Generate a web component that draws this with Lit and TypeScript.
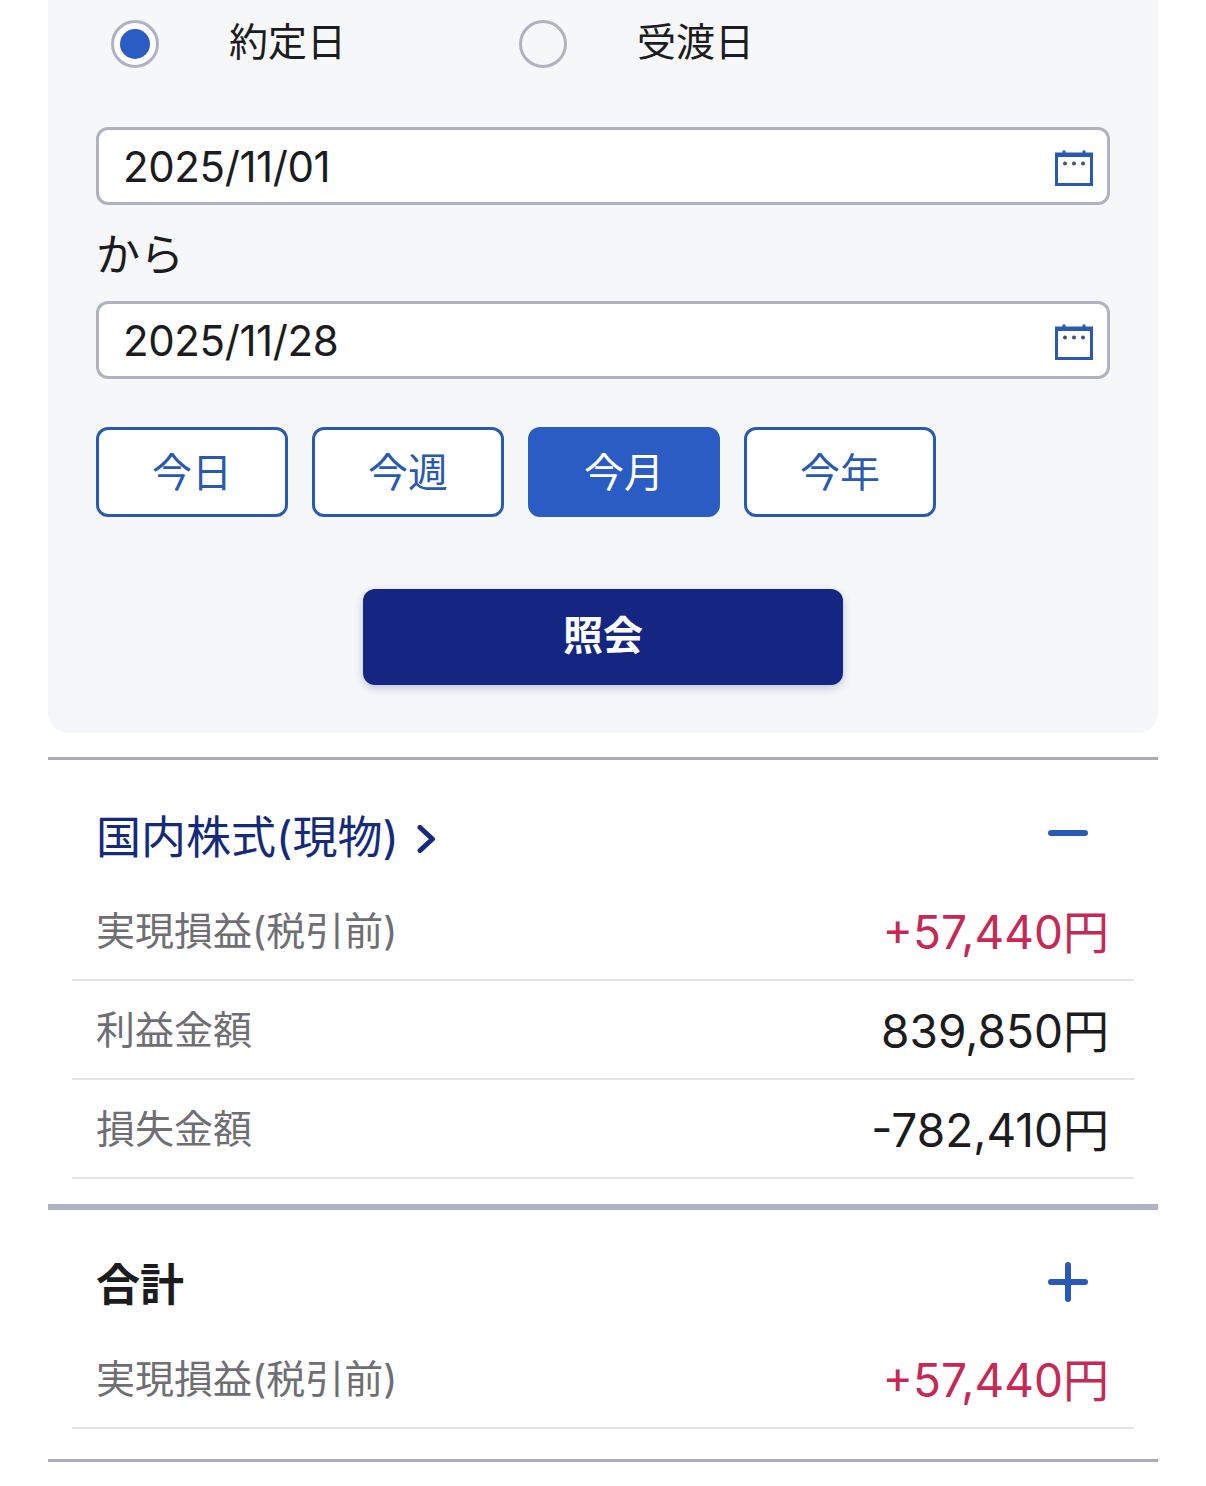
import { LitElement, html, css } from "lit";
import { customElement } from "lit/decorators.js";

const calendar = html`<svg class="cal" width="38" height="36" viewBox="0 0 38 36" fill="none">
  <rect x="1.5" y="4" width="35" height="30.5" stroke="#2a5ab0" stroke-width="3"/>
  <rect x="1" y="3" width="36" height="4" fill="#2a5ab0"/>
  <path d="M9 .5V5M29 .5V5" stroke="#2a5ab0" stroke-width="3"/>
  <circle cx="10" cy="13.5" r="2" fill="#44507f"/>
  <circle cx="19" cy="13.5" r="2" fill="#44507f"/>
  <circle cx="28" cy="13.5" r="2" fill="#44507f"/>
</svg>`;

@customElement("app-root")
export class AppRoot extends LitElement {
  static styles = css`
    :host {
      display: block;
      width: 1206px;
      height: 1486px;
      overflow: hidden;
      background: #fff;
      font-family: Inter, "Noto Sans CJK JP", sans-serif;
      color: #1c1c1e;
    }
    * { box-sizing: border-box; }
    .wrap { padding: 0 48px; }
    .panel {
      background: #f6f7f9;
      border-radius: 0 0 20px 20px;
      padding: 20px 48px 48px;
      height: 733px;
    }
    .radios { display: flex; height: 48px; padding-left: 15px; }
    .radio { display: flex; align-items: center; width: 408px; }
    .dot {
      width: 48px; height: 48px; border-radius: 50%;
      border: 3px solid #b0b2c2; background: #f6f7f9;
      display: flex; align-items: center; justify-content: center;
      margin-right: 70px;
    }
    .dot.on { background: #fff; }
    .dot.on::after {
      content: ""; width: 30px; height: 30px; border-radius: 50%;
      background: #2a5cc4;
    }
    .radio span { font-size: 39px; line-height: 48px; padding-bottom: 4px; }
    .input {
      height: 78px;
      background: #fff;
      border: 3px solid #b0b2c2;
      border-radius: 12px;
      display: flex; align-items: center; justify-content: space-between;
      padding: 0 14px 0 24px;
      font-size: 42px;
      letter-spacing: -0.4px;
    }
    .input.first { margin-top: 59px; }
    .cal { margin-top: 3px; }
    .kara { font-size: 44px; line-height: 96px; height: 96px; padding-top: 2px; }
    .periods { display: flex; gap: 24px; margin-top: 48px; }
    .period {
      width: 192px; height: 90px;
      border: 3px solid #2a5ab0; border-radius: 12px;
      background: #fff; color: #2a5ab0;
      display: flex; align-items: center; justify-content: center;
      font-size: 40px;
      padding-bottom: 5px;
    }
    .period.on { background: #2a5cc4; border-color: #2a5cc4; color: #fff; }
    .go-row { display: flex; justify-content: center; margin-top: 72px; }
    .go {
      width: 480px; height: 96px; border-radius: 12px;
      background: #142682; color: #fff;
      display: flex; align-items: center; justify-content: center;
      font-size: 40px; font-weight: 700;
      padding-bottom: 9px;
      box-shadow: 0 3px 8px rgba(20, 38, 130, 0.25);
    }
    .rule { height: 3px; background: #a9abb8; margin-top: 24px; }
    .rule.thick { height: 6px; background: #b0b2c8; margin-top: 25px; }
    .rule.end { margin-top: 30px; }
    .head {
      display: flex; align-items: flex-start; justify-content: space-between;
      padding: 0 70px 0 48px;
    }
    .head.one { height: 122px; padding-top: 48px; }
    .head.two { height: 120px; padding-top: 45px; }
    .title { display: flex; align-items: center; font-size: 45px; line-height: 60px; color: #142a7a; }
    .title svg { margin-left: 18px; margin-top: 1px; }
    .title.total { color: #1c1c1e; font-weight: 700; font-size: 44px; }
    .sign { margin-top: 7px; }
    .head.one .sign { margin-top: 5px; }
    .rows { padding: 0 24px; }
    .row {
      height: 99px;
      border-bottom: 2px solid #e4e4e8;
      display: flex; align-items: center; justify-content: space-between;
      padding: 0 25px 5px 24px;
    }
    .label { font-size: 39px; color: #6e6e73; }
    .value { font-size: 46px; margin-top: 2px; }
    .value.pos { color: #c52a55; }
  `;

  private row(label: string, value: string, pos = false) {
    return html`<div class="row">
      <span class="label">${label}</span>
      <span class="value ${pos ? "pos" : ""}">${value}</span>
    </div>`;
  }

  render() {
    return html`<div class="wrap">
      <div class="panel">
        <div class="radios">
          <div class="radio"><div class="dot on"></div><span>約定日</span></div>
          <div class="radio"><div class="dot"></div><span>受渡日</span></div>
        </div>
        <div class="input first"><span>2025/11/01</span>${calendar}</div>
        <div class="kara">から</div>
        <div class="input"><span>2025/11/28</span>${calendar}</div>
        <div class="periods">
          <div class="period">今日</div>
          <div class="period">今週</div>
          <div class="period on">今月</div>
          <div class="period">今年</div>
        </div>
        <div class="go-row"><div class="go">照会</div></div>
      </div>
      <div class="rule"></div>
      <div class="head one">
        <div class="title">国内株式(現物)
          <svg width="20" height="28" viewBox="0 0 20 28" fill="none">
            <path d="M3 2.5L15.5 14L3 25.5" stroke="#142a7a" stroke-width="5" stroke-linecap="round" stroke-linejoin="round"/>
          </svg>
        </div>
        <svg class="sign" width="40" height="40" viewBox="0 0 40 40" fill="none">
          <path d="M3 20H37" stroke="#2a5ab8" stroke-width="6" stroke-linecap="round"/>
        </svg>
      </div>
      <div class="rows">
        ${this.row("実現損益(税引前)", "+57,440円", true)}
        ${this.row("利益金額", "839,850円")}
        ${this.row("損失金額", "-782,410円")}
      </div>
      <div class="rule thick"></div>
      <div class="head two">
        <div class="title total">合計</div>
        <svg class="sign" width="40" height="40" viewBox="0 0 40 40" fill="none">
          <path d="M3 20H37M20 3V37" stroke="#2a5ab8" stroke-width="6" stroke-linecap="round"/>
        </svg>
      </div>
      <div class="rows">
        ${this.row("実現損益(税引前)", "+57,440円", true)}
      </div>
      <div class="rule end"></div>
    </div>`;
  }
}
